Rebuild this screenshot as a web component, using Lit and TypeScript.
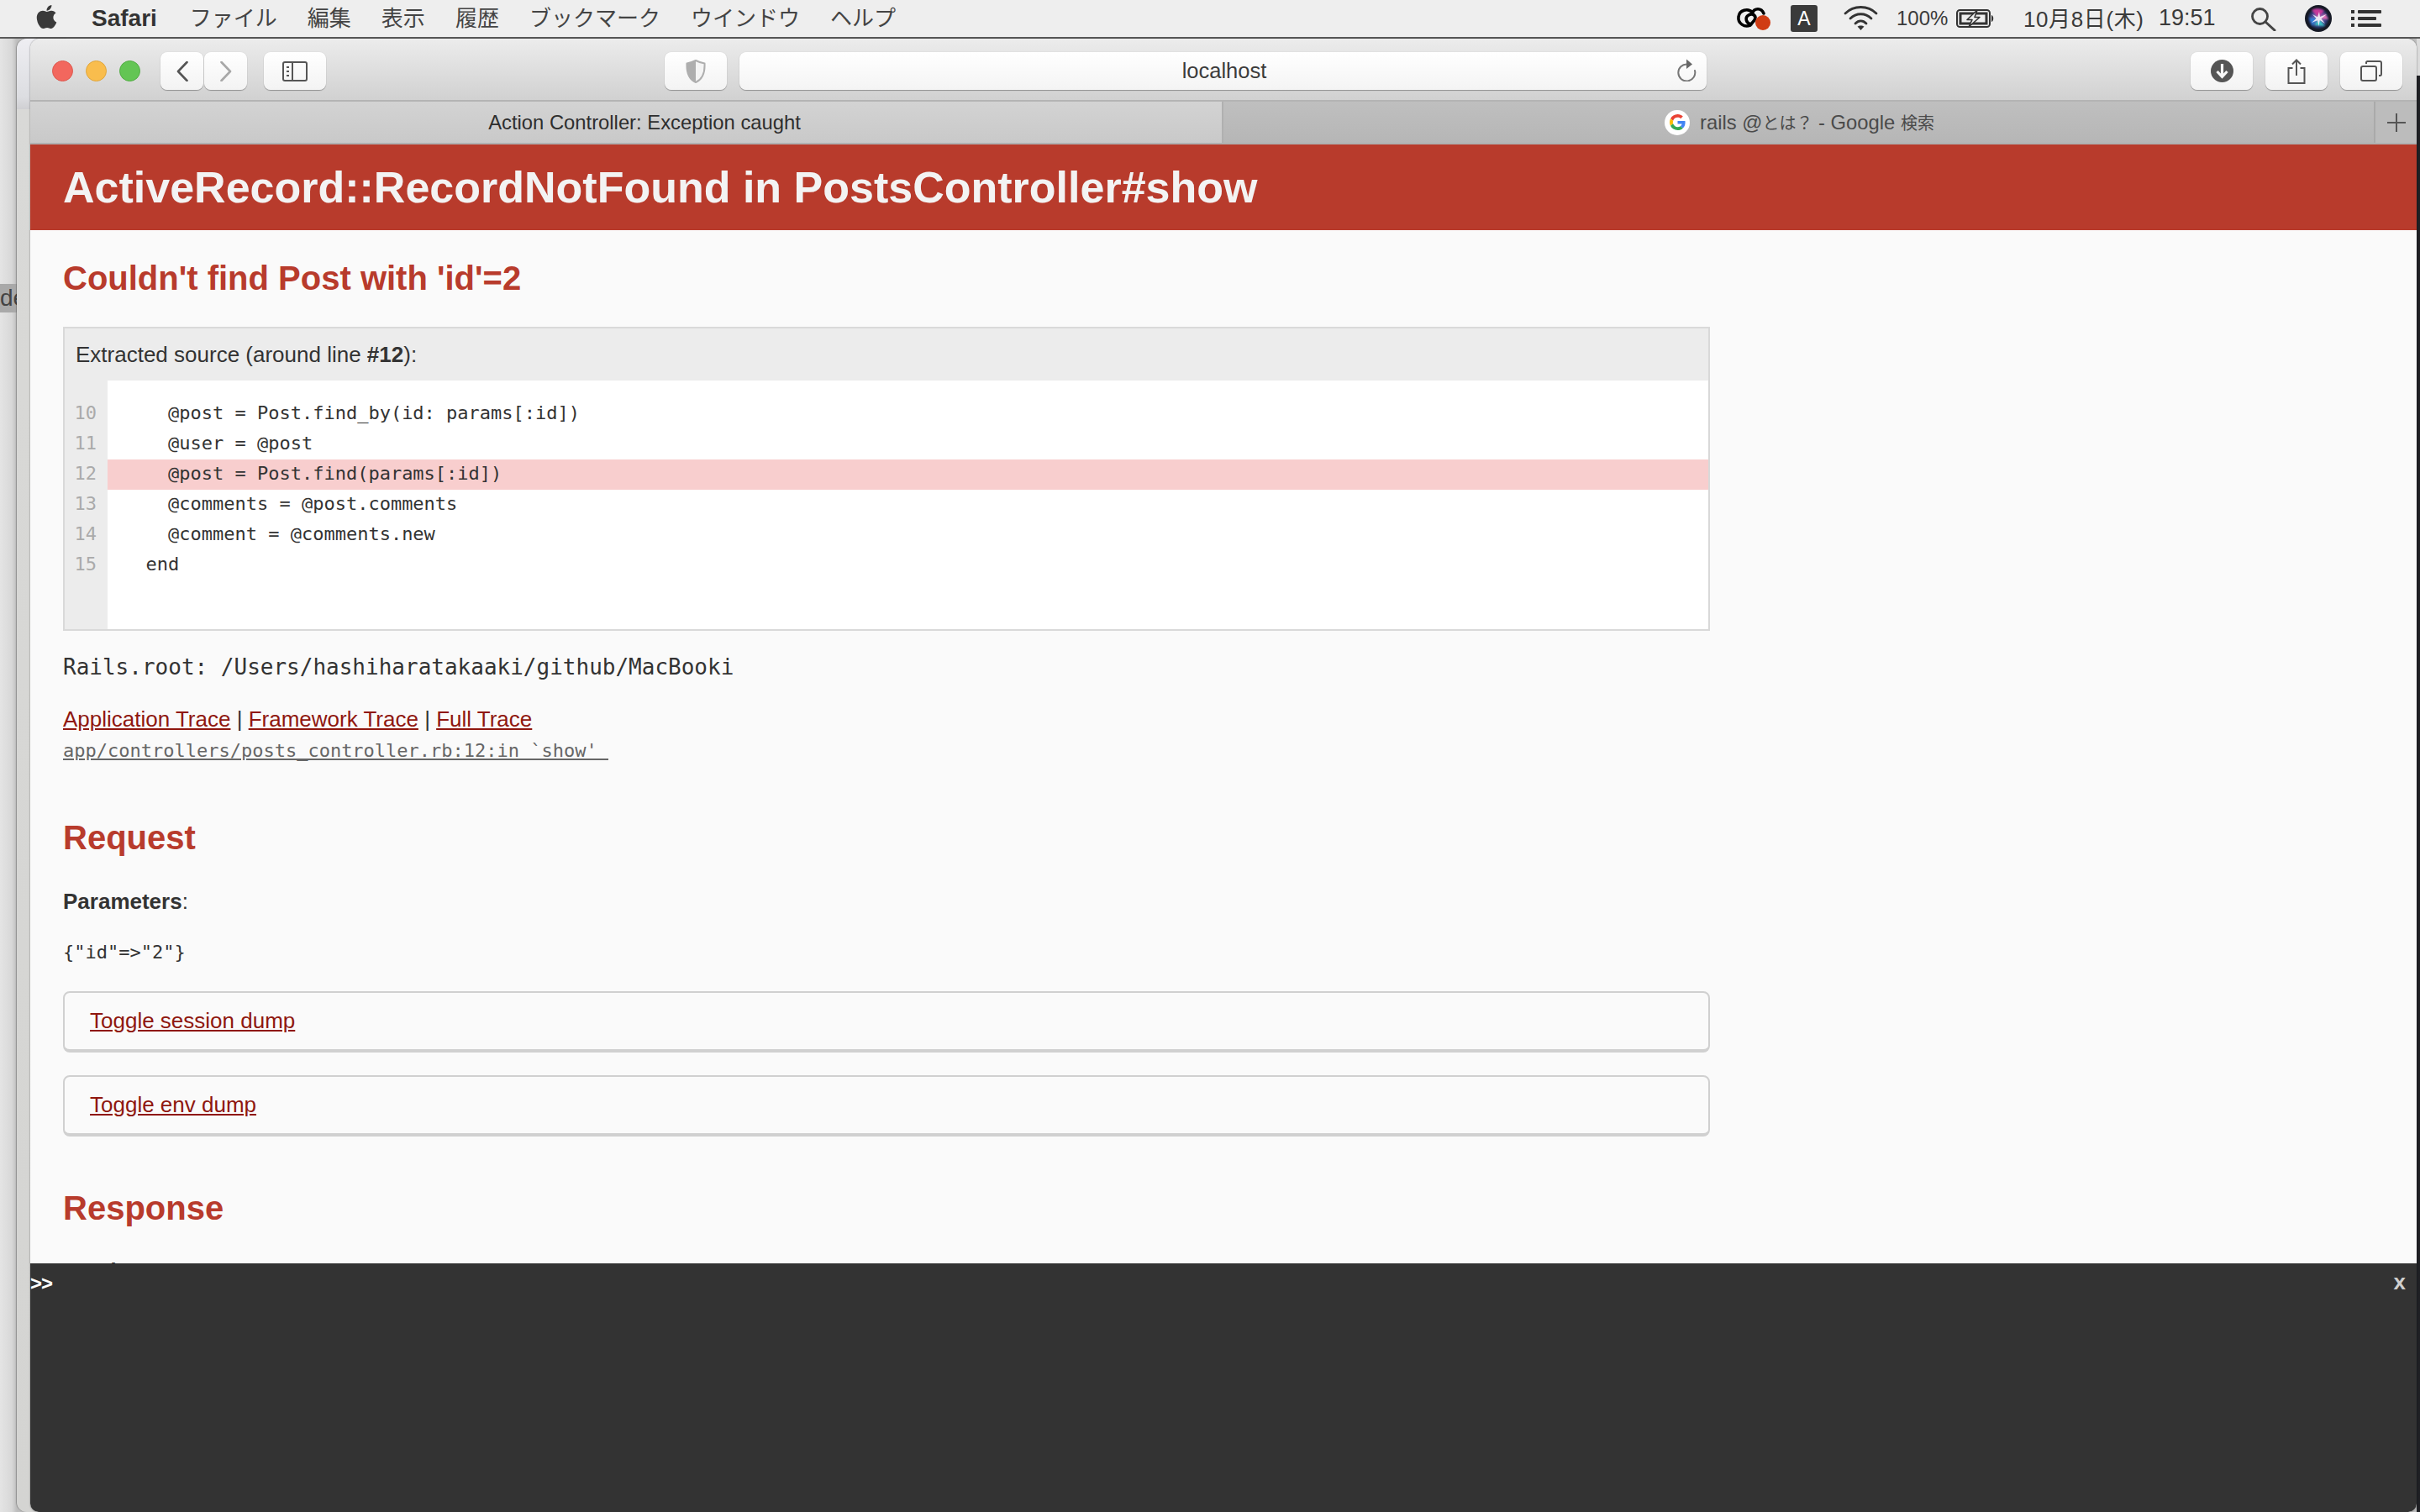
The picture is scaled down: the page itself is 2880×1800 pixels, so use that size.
import { LitElement, html, css, svg } from "lit";
import { customElement } from "lit/decorators.js";

const CODE: [string, string, boolean][] = [
  ["10", "    @post = Post.find_by(id: params[:id])", false],
  ["11", "    @user = @post", false],
  ["12", "    @post = Post.find(params[:id])", true],
  ["13", "    @comments = @post.comments", false],
  ["14", "    @comment = @comments.new", false],
  ["15", "  end", false],
];

const icon = (w: number, h: number, body: unknown) =>
  html`<svg width=${w} height=${h} viewBox="0 0 ${w} ${h}" fill="none">${body}</svg>`;

const apple = html`<svg class="apple" width="27" height="32" viewBox="0 0 384 512"><path fill="#3a3a3a" d="M318.7 268.7c-.2-36.7 16.4-64.4 50-84.8-18.8-26.9-47.2-41.7-84.7-44.6-35.5-2.8-74.3 20.7-88.5 20.7-15 0-49.4-19.7-76.4-19.7C63.3 141.2 4 184.8 4 273.5q0 39.3 14.4 81.2c12.8 36.7 59 126.7 107.2 125.2 25.2-.6 43-17.9 75.8-17.9 31.8 0 48.3 17.9 76.4 17.9 48.6-.7 90.4-82.5 102.6-119.3-65.2-30.7-61.7-90-61.7-91.9zm-56.6-164.2c27.3-32.4 24.8-61.9 24-72.5-24.1 1.4-52 16.4-67.9 34.9-17.5 19.8-27.8 44.3-25.6 71.9 26.1 2 49.9-11.4 69.5-34.3z"/></svg>`;

const adobe = icon(41, 30, svg`
  <path d="M20 8 C14 2 4 5 3 13 C2 21 10 26 17 23 L22 17 C25 12 20 8 15 11 C10 14 12 21 18 22" stroke="#000" stroke-width="3.6" stroke-linecap="round"/>
  <path d="M19 9 C22 2 30 2 33 9" stroke="#000" stroke-width="3.6" stroke-linecap="round"/>
  <circle cx="32" cy="20" r="9" fill="#d03c14"/>`);

const wifi = icon(41, 30, svg`
  <g stroke="#333" stroke-width="2.8" stroke-linecap="round">
    <path d="M2 9 C12 -1 29 -1 39 9"/>
    <path d="M8 15 C15 8 26 8 33 15"/>
    <path d="M14 21 C18 17 23 17 27 21"/>
  </g>
  <path d="M20.5 29 L16.5 24.5 C18.5 23 22.5 23 24.5 24.5 Z" fill="#333"/>`);

const battery = icon(46, 22, svg`
  <rect x="1" y="1" width="39" height="20" rx="3.5" stroke="#333" stroke-width="2"/>
  <rect x="5" y="5" width="31" height="12" stroke="#333" stroke-width="3"/>
  <path d="M42 7 C45 8 45 14 42 15 Z" fill="#333"/>
  <path d="M25 1 L13 12.5 H19 L15 21 L28 9.5 H22 Z" fill="#eeeeee" stroke="#333" stroke-width="1.6" stroke-linejoin="round"/>`);

const searchIcon = icon(30, 28, svg`
  <circle cx="10.5" cy="10.5" r="9" stroke="#444" stroke-width="2.8"/>
  <path d="M17 17 L28 27" stroke="#444" stroke-width="3" stroke-linecap="round"/>`);

const siri = html`<svg width="32" height="32" viewBox="0 0 32 32">
  <defs>
    <radialGradient id="sg" cx="50%" cy="50%" r="50%">
      <stop offset="0" stop-color="#a8a0c8"/><stop offset=".55" stop-color="#4f4a98"/>
      <stop offset=".8" stop-color="#23305c"/><stop offset="1" stop-color="#14161f"/>
    </radialGradient>
    <filter id="sb" x="-30%" y="-30%" width="160%" height="160%"><feGaussianBlur stdDeviation="1.2"/></filter>
  </defs>
  <circle cx="16" cy="16" r="16" fill="#161a26"/>
  <circle cx="16" cy="16" r="13.5" fill="url(#sg)"/>
  <g filter="url(#sb)">
    <path d="M8 6 C13 3 20 4 23 7 L16 15 Z" fill="#c8389a"/>
    <path d="M5 15 L15 16 L9 25 Z" fill="#2f7fd8"/>
    <path d="M24 10 L28 17 L18 16 Z" fill="#e86fb4"/>
    <path d="M11 24 L17 17 L24 25 Z" fill="#36c8c8"/>
  </g>
  <path d="M17 8 L18 14 L26 11 L19.5 16.2 L24 22 L17.8 18 L16.5 25 L15 18.2 L8 21 L13.5 16 L9 11 L15 14.2 Z" fill="#f6eefa" opacity=".9"/>
</svg>`;

const listIcon = icon(36, 20, svg`
  <g fill="#333">
    <rect x="0" y="0" width="4" height="4"/><rect x="8" y="0" width="28" height="4" rx="1"/>
    <rect x="0" y="8" width="4" height="4"/><rect x="8" y="8" width="22" height="4" rx="1"/>
    <rect x="0" y="16" width="4" height="4"/><rect x="8" y="16" width="28" height="4" rx="1"/>
  </g>`);

const chevLeft = icon(14, 24, svg`<path d="M12.5 1 L2 12 L12.5 23" stroke="#555" stroke-width="2.6" stroke-linejoin="round" stroke-linecap="round"/>`);
const chevRight = icon(14, 24, svg`<path d="M1.5 1 L12 12 L1.5 23" stroke="#a8a8a8" stroke-width="2.6" stroke-linejoin="round" stroke-linecap="round"/>`);

const sidebar = icon(30, 24, svg`
  <rect x="1" y="1" width="28" height="22" rx="2" stroke="#555" stroke-width="2"/>
  <path d="M12 1 V23" stroke="#555" stroke-width="2"/>
  <g fill="#555"><rect x="5" y="6" width="3" height="2"/><rect x="5" y="11" width="3" height="2"/><rect x="5" y="16" width="3" height="2"/></g>`);

const shield = icon(24, 28, svg`
  <path d="M12 1 C8 3 5 4 1.5 4.5 C1 14 3 23 12 27 C21 23 23 14 22.5 4.5 C19 4 16 3 12 1 Z" stroke="#aeaeae" stroke-width="2" fill="#f4f4f4"/>
  <path d="M12 1 C8 3 5 4 1.5 4.5 C1 14 3 23 12 27 Z" fill="#aeaeae"/>`);

const reload = icon(24, 27, svg`
  <path d="M13 6.5 A10 10 0 1 0 22 14" stroke="#777" stroke-width="2" stroke-linecap="round"/>
  <path d="M12 0.5 L19 6.5 L12 12 Z" fill="#666"/>`);

const download = icon(27, 27, svg`
  <circle cx="13.5" cy="13.5" r="13.5" fill="#555"/>
  <path d="M13.5 5 V20 M7.5 14 L13.5 20.5 L19.5 14" stroke="#f6f6f6" stroke-width="3.2"/>`);

const share = icon(22, 30, svg`
  <path d="M6.5 11 H1.5 V29 H20.5 V11 H15.5" stroke="#555" stroke-width="2"/>
  <path d="M11 20 V2 M6 6.5 L11 1.5 L16 6.5" stroke="#555" stroke-width="2"/>`);

const tabsIcon = icon(26, 25, svg`
  <path d="M7 4 V2.5 Q7 1 8.5 1 H23 Q25 1 25 3 V16 Q25 18 23.5 18 H22" stroke="#555" stroke-width="2"/>
  <rect x="1" y="7" width="18" height="17" rx="2" stroke="#555" stroke-width="2"/>`);

const plus = icon(22, 22, svg`<path d="M11 0 V22 M0 11 H22" stroke="#555" stroke-width="2"/>`);

const google = html`<span class="gcircle"><svg width="19" height="19" viewBox="0 0 48 48">
  <path fill="#EA4335" d="M24 9.5c3.54 0 6.71 1.22 9.21 3.6l6.85-6.85C35.9 2.38 30.47 0 24 0 14.62 0 6.51 5.38 2.56 13.22l7.98 6.19C12.43 13.72 17.74 9.5 24 9.5z"/>
  <path fill="#4285F4" d="M46.98 24.55c0-1.57-.15-3.09-.38-4.55H24v9.02h12.94c-.58 2.96-2.26 5.48-4.78 7.18l7.73 6c4.51-4.18 7.09-10.36 7.09-17.65z"/>
  <path fill="#FBBC05" d="M10.53 28.59c-.48-1.45-.76-2.99-.76-4.59s.27-3.14.76-4.59l-7.98-6.19C.92 16.46 0 20.12 0 24c0 3.88.92 7.54 2.56 10.78l7.97-6.19z"/>
  <path fill="#34A853" d="M24 48c6.48 0 11.93-2.13 15.89-5.81l-7.73-6c-2.15 1.45-4.92 2.3-8.16 2.3-6.26 0-11.57-4.22-13.47-9.91l-7.98 6.19C6.51 42.62 14.62 48 24 48z"/>
</svg></span>`;

@customElement("app-root")
export class AppRoot extends LitElement {
  static styles = css`
    :host {
      display: flex;
      flex-direction: column;
      width: 2880px;
      height: 1800px;
      overflow: hidden;
      font-family: "Liberation Sans", "Noto Sans CJK JP", sans-serif;
      color: #333;
    }
    svg { display: block; flex: none; }

    /* macOS menu bar */
    .menubar {
      flex: none;
      height: 44px;
      display: flex;
      align-items: center;
      padding: 0 46px 0 42px;
      background: #eeeeee;
      border-bottom: 2px solid #5a5a5a;
      font-size: 26px;
      color: #3a3a3a;
      white-space: nowrap;
    }
    .apple { margin-top: -5px; }
    .app { font-weight: 700; font-size: 28px; margin-left: 40px; margin-right: 39px; color: #333; padding-bottom: 1px; }
    .menus { display: flex; gap: 36px; font-family: "Noto Sans CJK JP", sans-serif; font-weight: 400; padding-bottom: 5px; line-height: 38px; color: #444; }
    .status { margin-left: auto; display: flex; align-items: center; }
    .badge {
      width: 32px; height: 32px; margin-left: 24px; border-radius: 3px;
      background: #3a3a3a; color: #fff; font-size: 23px;
      display: flex; align-items: center; justify-content: center;
    }
    .wifi { margin-left: 31px; }
    .pct { margin-left: 22px; width: 60px; font-size: 24px; }
    .batt { margin-left: 11px; }
    .date { margin-left: 34px; width: 144px; font-size: 26px; letter-spacing: .6px; padding-bottom: 4px; }
    .time { margin-left: 17px; width: 67px; font-size: 27px; padding-bottom: 1px; }
    .srch { margin-left: 43px; padding-top: 2px; }
    .siri { margin-left: 34px; }
    .list { margin-left: 23px; }

    /* desktop */
    .desktop {
      flex: 1;
      position: relative;
      background: linear-gradient(90deg, #e4e4e4 0, #d8d8d8 14px, #bdbdbd 20px);
    }
    .right-edge {
      position: absolute; left: 2876px; top: 0; width: 4px; height: 100%;
      background: linear-gradient(180deg, #dcdcdc 0 44px, #1f2024 44px);
    }
    .behind {
      position: absolute; left: 20px; top: 0; width: 60px; bottom: 0;
      border-radius: 12px 0 0 12px;
      background: linear-gradient(180deg, #eeeef2 0, #dcdde1 70px, #cfcfd2 84px, #d9d9d7 84px, #d4d4d2 100%);
      box-shadow: -1px 0 1px rgba(0,0,0,.25);
    }
    .peek {
      position: absolute; left: 0; top: 292px; width: 20px; height: 34px;
      background: #a9a9a9; color: #444; font-size: 28px; line-height: 34px; overflow: hidden; white-space: nowrap;
    }

    /* Safari window */
    .window {
      position: absolute; left: 36px; top: 0; width: 2840px; bottom: 0;
      display: flex; flex-direction: column;
      border-radius: 12px 12px 10px 10px;
      overflow: hidden;
      box-shadow: 0 0 2px rgba(0,0,0,.5);
      background: #fafafa;
    }
    .toolbar {
      flex: none; height: 75px; box-sizing: border-box;
      display: flex; align-items: center;
      padding: 16px 17px 12px 26px;
      background: linear-gradient(180deg, #ececec 0, #d1d1d1 100%);
      border-bottom: 2px solid #b4b4b4;
    }
    .lights { display: flex; gap: 15px; margin-right: 24px; }
    .light { width: 25px; height: 25px; border-radius: 50%; box-sizing: border-box; border: 1px solid; }
    .red { background: #f2675e; border-color: #dd5a50; }
    .yellow { background: #f9bd4d; border-color: #e0a63c; }
    .green { background: #63c554; border-color: #52ad44; }
    .btn {
      flex: none; height: 45px; width: 74px; box-sizing: border-box;
      border-radius: 8px;
      background: linear-gradient(180deg, #ffffff 0, #f3f3f3 100%);
      box-shadow: 0 1px 1px rgba(0,0,0,.3), 0 0 1px rgba(0,0,0,.2);
      display: flex; align-items: center; justify-content: center;
    }
    .narrow { width: 51px; }
    .fwd { margin-left: 1px; }
    .side { margin-left: 20px; }
    .shield { margin-left: 403px; }
    .address {
      flex: none; width: 1151px; height: 45px; margin-left: 15px; box-sizing: border-box;
      position: relative;
      border-radius: 8px;
      background: linear-gradient(180deg, #ffffff 0, #f4f4f4 100%);
      box-shadow: 0 1px 1px rgba(0,0,0,.3), 0 0 1px rgba(0,0,0,.2);
      display: flex; align-items: center; justify-content: center;
      font-size: 25.5px; color: #3c3c3c; padding-left: 3px;
    }
    .reload { position: absolute; right: 12px; top: 8px; }
    .tools { margin-left: auto; display: flex; gap: 15px; }

    .tabs {
      flex: none; height: 51px; box-sizing: border-box;
      display: flex;
      background: #bcbcbc;
      border-bottom: 2px solid #b0b0b0;
      font-size: 23.8px;
      white-space: nowrap;
    }
    .tab { display: flex; align-items: center; justify-content: center; }
    .tab-on {
      width: 1420px; padding-left: 44px; box-sizing: border-box;
      background: linear-gradient(180deg, #d3d3d3, #c9c9c9);
      color: #2e2e2e;
      border-right: 2px solid #b0b0b0;
    }
    .tab-off {
      width: 1371px; box-sizing: border-box; gap: 12px; padding-left: 2px; color: #4a4a4a;
      background: linear-gradient(180deg, #bfbfbf, #b6b6b6);
      border-right: 2px solid #aaaaaa;
    }
    .cjk { font-size: 20px; }
    .tab-add { flex: 1; }
    .gcircle {
      width: 30px; height: 30px; border-radius: 50%; background: #fff;
      display: flex; align-items: center; justify-content: center;
    }

    /* Rails error page */
    .page { flex: 1; min-height: 0; overflow: hidden; position: relative; background: #fafafa; font-size: 26px; line-height: 36px; }
    header {
      height: 102px; box-sizing: border-box; padding: 0 39px;
      display: flex; align-items: center;
      background: #b83b2c; color: #f3f3f3;
    }
    h1 { margin: 0; font-size: 52px; line-height: 57px; font-weight: 700; white-space: nowrap; }
    .container { padding: 0 39px; }
    h2 { margin: 0; color: #b83b2c; font-size: 40px; line-height: 50px; font-weight: 700; }
    .exc { margin: 32px 0 0; }
    .source { width: 1960px; box-sizing: border-box; margin-top: 33px; border: 2px solid #d9d9d9; background: #ececec; }
    .info { padding: 13px; }
    .data { display: flex; background: #fff; font-family: "DejaVu Sans Mono", monospace; font-size: 22px; line-height: 36px; height: 296px; }
    .nums { flex: none; width: 51px; box-sizing: border-box; padding: 21px 13px 0 0; text-align: right; background: #ececec; color: #aaa; }
    .lines { flex: 1; padding-top: 22px; white-space: pre; color: #333; }
    .line { padding-left: 19px; height: 36px; line-height: 34px; }
    .line.active { background: #f8cece; }
    .mono { font-family: "DejaVu Sans Mono", monospace; }
    .root { margin-top: 25px; white-space: pre; }
    .links { margin-top: 26px; }
    a { color: #8f170f; text-decoration: underline; }
    .trace { margin-top: 2px; font-size: 22px; white-space: pre; }
    .trace a { color: #666; }
    .req { margin-top: 60px; }
    .params { margin-top: 33px; }
    .dump { margin-top: 25px; font-size: 22px; }
    .details {
      width: 1960px; box-sizing: border-box; margin-top: 27px; height: 73px;
      border: 2px solid #d0d0d0; border-bottom-width: 4px; border-radius: 8px;
      padding: 15px 30px;
    }
    .first { margin-top: 28px; }
    .resp { margin-top: 60px; }
    .headers { margin-top: 32px; }
    b { font-weight: 700; }

    .console {
      position: absolute; left: 0; right: 0; bottom: 0; height: 296px;
      background: #333333; color: #fff;
      font-family: "DejaVu Sans Mono", monospace; font-size: 22px;
    }
    .prompt { position: absolute; left: 0; top: 10px; line-height: 28px; font-family: "Liberation Sans", sans-serif; font-weight: 700; font-size: 24px; letter-spacing: -1px; }
    .close { position: absolute; right: 13px; top: 8px; line-height: 28px; font-family: "Liberation Sans", sans-serif; font-weight: 700; font-size: 26px; color: #cfcfcf; }
  `;

  render() {
    return html`
      <div class="menubar">
        ${apple}
        <span class="app">Safari</span>
        <div class="menus">
          <span>ファイル</span><span>編集</span><span>表示</span><span>履歴</span><span>ブックマーク</span><span>ウインドウ</span><span>ヘルプ</span>
        </div>
        <div class="status">
          ${adobe}
          <span class="badge">A</span>
          <span class="wifi">${wifi}</span>
          <span class="pct">100%</span>
          <span class="batt">${battery}</span>
          <span class="date">10月8日(木)</span>
          <span class="time">19:51</span>
          <span class="srch">${searchIcon}</span>
          <span class="siri">${siri}</span>
          <span class="list">${listIcon}</span>
        </div>
      </div>
      <div class="desktop">
        <div class="right-edge"></div>
        <div class="peek">de</div>
        <div class="behind"></div>
        <div class="window">
          <div class="toolbar">
            <div class="lights"><span class="light red"></span><span class="light yellow"></span><span class="light green"></span></div>
            <span class="btn narrow">${chevLeft}</span>
            <span class="btn narrow fwd">${chevRight}</span>
            <span class="btn side">${sidebar}</span>
            <span class="btn shield">${shield}</span>
            <div class="address">localhost<span class="reload">${reload}</span></div>
            <div class="tools">
              <span class="btn">${download}</span>
              <span class="btn">${share}</span>
              <span class="btn">${tabsIcon}</span>
            </div>
          </div>
          <div class="tabs">
            <div class="tab tab-on">Action Controller: Exception caught</div>
            <div class="tab tab-off">${google}<span>rails @<span class="cjk">とは？</span> - Google <span class="cjk">検索</span></span></div>
            <div class="tab tab-add">${plus}</div>
          </div>
          <div class="page">
            <header><h1>ActiveRecord::RecordNotFound in PostsController#show</h1></header>
            <div class="container">
              <h2 class="exc">Couldn't find Post with 'id'=2</h2>
              <div class="source">
                <div class="info">Extracted source (around line <b>#12</b>):</div>
                <div class="data">
                  <div class="nums">${CODE.map((c) => html`<div>${c[0]}</div>`)}</div>
                  <div class="lines">${CODE.map((c) => html`<div class="line ${c[2] ? "active" : ""}">${c[1]}</div>`)}</div>
                </div>
              </div>
              <div class="root mono">Rails.root: /Users/hashiharatakaaki/github/MacBooki</div>
              <div class="links"><a>Application Trace</a> | <a>Framework Trace</a> | <a>Full Trace</a></div>
              <div class="trace mono"><a>app/controllers/posts_controller.rb:12:in \`show' </a></div>
              <h2 class="req">Request</h2>
              <div class="params"><b>Parameters</b>:</div>
              <div class="dump mono">{"id"=>"2"}</div>
              <div class="details first"><a>Toggle session dump</a></div>
              <div class="details"><a>Toggle env dump</a></div>
              <h2 class="resp">Response</h2>
              <div class="headers"><b>Headers</b>:</div>
            </div>
            <div class="console">
              <span class="prompt">&gt;&gt;</span>
              <span class="close">x</span>
            </div>
          </div>
        </div>
      </div>
    `;
  }
}
